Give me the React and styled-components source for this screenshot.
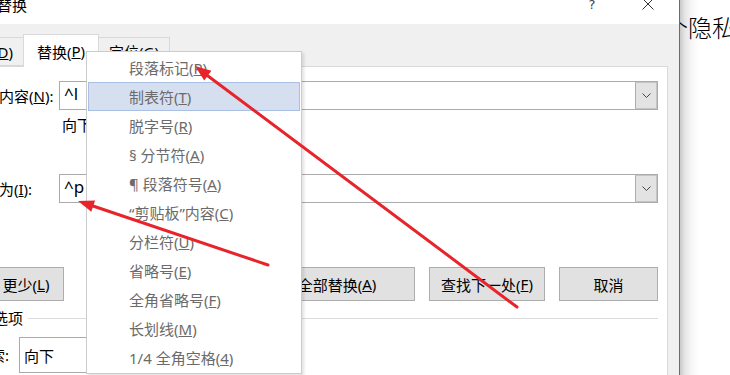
import React from "react";
import styled, { createGlobalStyle } from "styled-components";

const GlobalStyle = createGlobalStyle`
  html, body {
    margin: 0;
    padding: 0;
    background: #fff;
    overflow: hidden;
  }
  body {
    font-family: "Noto Sans", "Noto Sans CJK SC", sans-serif;
  }
`;

const menuItems = [
  { pre: "段落标记(", key: "P", post: ")" },
  { pre: "制表符(", key: "T", post: ")", active: true },
  { pre: "脱字号(", key: "R", post: ")" },
  { pre: "§ 分节符(", key: "A", post: ")" },
  { pre: "¶ 段落符号(", key: "A", post: ")" },
  { pre: "“剪贴板”内容(", key: "C", post: ")" },
  { pre: "分栏符(", key: "U", post: ")" },
  { pre: "省略号(", key: "E", post: ")" },
  { pre: "全角省略号(", key: "F", post: ")" },
  { pre: "长划线(", key: "M", post: ")" },
  { pre: "1/4 全角空格(", key: "4", post: ")" },
];

export default function App() {
  return (
    <>
      <GlobalStyle />
      <Page>
        <Dialog>
          <TitleBar>
            <Title>查找和替换</Title>
            <Controls>
              <ControlBtn>?</ControlBtn>
              <ControlBtn>
                <svg width="12" height="12" viewBox="0 0 12 12">
                  <path d="M0.5 0.5 L11.5 11.5 M11.5 0.5 L0.5 11.5" stroke="#333" strokeWidth="1" fill="none" />
                </svg>
              </ControlBtn>
            </Controls>
          </TitleBar>
          <Body>
            <TabRow>
              <Tab>
                查找(<u>D</u>)
              </Tab>
              <Tab $active>
                替换(<u>P</u>)
              </Tab>
              <Tab>
                定位(<u>G</u>)
              </Tab>
            </TabRow>
            <Panel>
              <FieldRow>
                <Label>
                  查找内容(<u>N</u>):
                </Label>
                <Combo>
                  <ComboText>^l</ComboText>
                  <DropBtn>
                    <Chevron />
                  </DropBtn>
                </Combo>
              </FieldRow>
              <OptionLine>向下</OptionLine>
              <FieldRow $gap={39}>
                <Label>
                  替换为(<u>I</u>):
                </Label>
                <Combo>
                  <ComboText>^p</ComboText>
                  <DropBtn>
                    <Chevron />
                  </DropBtn>
                </Combo>
              </FieldRow>
              <ButtonRow>
                <Button $w={97} $lead>
                  &lt;&lt; 更少(<u>L</u>)
                </Button>
                <ButtonGroup>
                  <Button $w={96}>
                    替换(<u>R</u>)
                  </Button>
                  <Button $w={156}>
                    全部替换(<u>A</u>)
                  </Button>
                  <Button $w={116}>
                    查找下一处(<u>F</u>)
                  </Button>
                  <Button $w={99}>取消</Button>
                </ButtonGroup>
              </ButtonRow>
              <GroupHeader>
                <GroupLabel>搜索选项</GroupLabel>
                <GroupLine />
              </GroupHeader>
              <SearchRow>
                <SearchLabel>搜索:</SearchLabel>
                <Select>向下</Select>
              </SearchRow>
            </Panel>
          </Body>
        </Dialog>
        <DocArea>
          <DocText>个隐私</DocText>
        </DocArea>

        <Menu>
          {menuItems.map((m, i) => (
            <MenuItem key={i} $active={m.active}>
              {m.pre}
              <u>{m.key}</u>
              {m.post}
            </MenuItem>
          ))}
        </Menu>

        <Arrows width="730" height="375" viewBox="0 0 730 375">
          <line x1="517" y1="307" x2="208" y2="76" stroke="#e8242a" strokeWidth="3" strokeLinecap="round" />
          <polygon points="195,66 211.4,70.8 204.2,80.4" fill="#e8242a" />
          <line x1="268" y1="265" x2="93" y2="206" stroke="#e8242a" strokeWidth="3" strokeLinecap="round" />
          <polygon points="78,201 95.1,200.4 91.3,211.8" fill="#e8242a" />
        </Arrows>
      </Page>
    </>
  );
}

function Chevron() {
  return (
    <svg width="9" height="6" viewBox="0 0 9 6">
      <polyline points="0.5,0.5 4.5,4.5 8.5,0.5" stroke="#444" strokeWidth="1" fill="none" />
    </svg>
  );
}

const Page = styled.div`
  position: relative;
  display: flex;
  width: 730px;
  height: 375px;
  overflow: hidden;
  background: #fff;
`;

const Dialog = styled.div`
  position: relative;
  z-index: 1;
  flex: none;
  box-sizing: border-box;
  width: 740px;
  height: 375px;
  margin-left: -60px;
  display: flex;
  flex-direction: column;
  background: #f0f0f0;
  border-right: 1px solid #6b6b6b;
`;

const TitleBar = styled.div`
  height: 24px;
  flex: none;
  display: flex;
  align-items: flex-start;
  background: #fff;
  padding: 0 3px 0 12px;
`;

const Title = styled.div`
  margin-top: -5px;
  font-size: 15px;
  line-height: 20px;
  color: #000;
`;

const Controls = styled.div`
  margin-left: auto;
  display: flex;
`;

const ControlBtn = styled.div`
  width: 56px;
  height: 12px;
  display: flex;
  align-items: center;
  justify-content: center;
  font-family: "DejaVu Sans", sans-serif;
  font-size: 13px;
  color: #444;
  margin-top: -2px;
`;

const Body = styled.div`
  flex: 1;
  display: flex;
  flex-direction: column;
  padding: 0 11px 0 12px;
`;

const TabRow = styled.div`
  height: 42px;
  display: flex;
  align-items: flex-end;
`;

const Tab = styled.div`
  position: relative;
  box-sizing: border-box;
  height: ${(p) => (p.$active ? "33px" : "29px")};
  padding: 0 ${(p) => (p.$active ? "13px" : "10px")};
  margin-bottom: ${(p) => (p.$active ? "-1px" : "0")};
  z-index: ${(p) => (p.$active ? 2 : 0)};
  background: ${(p) => (p.$active ? "#fff" : "#f0f0f0")};
  border: 1px solid #d9d9d9;
  border-bottom: ${(p) => (p.$active ? "none" : "1px solid #d9d9d9")};
  margin-left: -1px;
  display: flex;
  align-items: center;
  font-size: 15px;
  color: #000;
  white-space: nowrap;

  &:first-child {
    margin-left: 0;
  }
`;

const Panel = styled.div`
  flex: 1;
  background: #fff;
  border: 1px solid #d9d9d9;
  border-bottom: none;
  padding: 14px 9px 0 16px;
  display: flex;
  flex-direction: column;
`;

const FieldRow = styled.div`
  display: grid;
  grid-template-columns: 90px 1fr;
  align-items: center;
  margin-top: ${(p) => (p.$gap ? `${p.$gap}px` : "0")};
`;

const Label = styled.div`
  font-size: 15px;
  line-height: 20px;
  color: #000;
  white-space: nowrap;
`;

const Combo = styled.div`
  box-sizing: border-box;
  height: 29px;
  display: flex;
  border: 1px solid #ababab;
  background: #fff;
`;

const ComboText = styled.div`
  flex: 1;
  padding: 0 4px;
  font-size: 17px;
  line-height: 24px;
  color: #000;
`;

const DropBtn = styled.div`
  width: 20px;
  display: flex;
  align-items: center;
  justify-content: center;
  background: #e3e3e3;
  border-left: 1px solid #adadad;
  border-right: 1px solid #c4c4c4;
  border-top: 1px solid #c4c4c4;
  border-bottom: 1px solid #c4c4c4;
`;

const OptionLine = styled.div`
  margin-top: 5px;
  padding-left: 93px;
  font-size: 15px;
  line-height: 20px;
  color: #000;
`;

const ButtonRow = styled.div`
  margin-top: 64px;
  display: flex;
  align-items: center;
`;

const ButtonGroup = styled.div`
  margin-left: auto;
  display: flex;
  gap: 14px;
`;

const Button = styled.div`
  box-sizing: border-box;
  width: ${(p) => p.$w}px;
  height: 34px;
  margin-left: ${(p) => (p.$lead ? "-2px" : "0")};
  display: flex;
  align-items: center;
  justify-content: center;
  background: #e1e1e1;
  border: 1px solid #adadad;
  font-size: 15px;
  color: #000;
  white-space: nowrap;
`;

const GroupHeader = styled.div`
  margin-top: 7px;
  height: 20px;
  display: flex;
  align-items: center;
`;

const GroupLabel = styled.div`
  margin-left: -6px;
  font-size: 15px;
  line-height: 20px;
  color: #000;
  white-space: nowrap;
`;

const GroupLine = styled.div`
  flex: 1;
  height: 1px;
  margin-left: 5px;
  background: #dcdcdc;
`;

const SearchRow = styled.div`
  margin-top: 9px;
  display: flex;
  align-items: center;
`;

const SearchLabel = styled.div`
  width: 44px;
  margin-left: 6px;
  font-size: 15px;
  line-height: 20px;
  color: #000;
`;

const Select = styled.div`
  box-sizing: border-box;
  width: 150px;
  height: 36px;
  display: flex;
  align-items: center;
  padding-left: 4px;
  border: 1px solid #ababab;
  font-size: 15px;
  color: #000;
`;

const DocArea = styled.div`
  flex: 1;
  position: relative;
  overflow: visible;
  background: linear-gradient(to right, #c9c9c9 0px, #e6e6e6 5px, #f7f7f7 12px, #fff 20px);
`;

const DocText = styled.div`
  margin-left: -16px;
  margin-top: 12px;
  font-size: 24px;
  line-height: 30px;
  color: #000;
  white-space: nowrap;
  font-family: "Noto Sans CJK SC", sans-serif;
  font-weight: 300;
`;

const Menu = styled.div`
  position: absolute;
  z-index: 2;
  left: 86px;
  top: 51px;
  width: 216px;
  box-sizing: border-box;
  padding: 1px;
  background: #fff;
  border: 1px solid #cccccc;
  box-shadow: 2px 2px 3px rgba(0, 0, 0, 0.12);
`;

const MenuItem = styled.div`
  box-sizing: border-box;
  height: 29px;
  padding-left: ${(p) => (p.$active ? "40px" : "41px")};
  display: flex;
  align-items: center;
  font-size: 15px;
  color: #6b6b6b;
  white-space: nowrap;
  background: ${(p) => (p.$active ? "#d5dff0" : "transparent")};
  border: ${(p) => (p.$active ? "1px solid #a8c0e4" : "none")};
`;

const Arrows = styled.svg`
  position: absolute;
  z-index: 3;
  left: 0;
  top: 0;
  pointer-events: none;
`;
